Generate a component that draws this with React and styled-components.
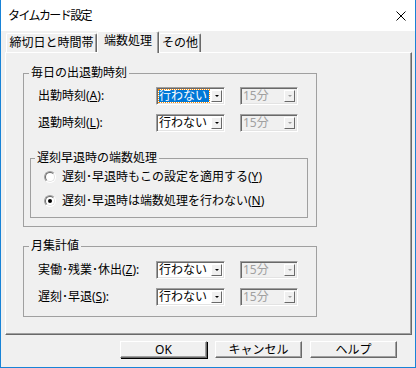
import React from "react";
import styled, { createGlobalStyle } from "styled-components";

const GlobalStyle = createGlobalStyle`
  html, body { margin: 0; padding: 0; background: #f0f0f0; }
  body {
    font-family: "Noto Sans", "Noto Sans CJK JP", sans-serif;
    font-size: 12px;
    color: #000;
  }
`;

const Window = styled.div`
  width: 416px;
  height: 368px;
  box-sizing: border-box;
  border: 1px solid #1883d7;
  border-top: none;
  background: #f0f0f0;
  display: flex;
  flex-direction: column;
`;

const TitleBar = styled.div`
  height: 31px;
  flex: none;
  background: #fff;
  display: flex;
  align-items: center;
  justify-content: space-between;
  padding: 0 9px 0 7px;
`;

const Title = styled.div`
  font-size: 12px;
  letter-spacing: -1.6px;
  line-height: 14px;
  padding-top: 1px;
`;

const Body = styled.div`
  display: flex;
  flex-direction: column;
  padding: 0 3px 0 4px;
`;

const TabStrip = styled.div`
  height: 21px;
  display: flex;
  align-items: flex-end;
  padding-left: 1px;
`;

const Tab = styled.div`
  position: relative;
  box-sizing: border-box;
  width: ${(p) => p.w}px;
  height: ${(p) => (p.active ? 22 : 19)}px;
  margin-bottom: ${(p) => (p.active ? -1 : 0)}px;
  z-index: ${(p) => (p.active ? 1 : 0)};
  background: #f0f0f0;
  border-top: 1px solid #fff;
  border-left: 1px solid #fff;
  border-right: 1px solid #696969;
  box-shadow: inset -1px 0 #a0a0a0;
  border-radius: 2px 2px 0 0;
  display: flex;
  align-items: ${(p) => (p.active ? "flex-start" : "center")};
  padding-top: ${(p) => (p.active ? 2 : 0)}px;
  justify-content: center;
  line-height: 14px;
  white-space: nowrap;
`;

const Panel = styled.div`
  box-sizing: border-box;
  height: 283px;
  border-top: 1px solid #fff;
  border-left: 1px solid #fff;
  border-right: 1px solid #696969;
  border-bottom: 1px solid #696969;
  box-shadow: inset -1px -1px #a0a0a0;
  padding: 13px 0 0 17px;
  display: flex;
  flex-direction: column;
`;

const Group = styled.fieldset`
  box-sizing: border-box;
  width: ${(p) => p.w}px;
  margin: ${(p) => p.mt || 0}px 0 0 ${(p) => p.ml || 0}px;
  padding: 0;
  border: 1px solid #a0a0a0;
  min-width: 0;
`;

const Legend = styled.legend`
  margin-left: ${(p) => p.ml || 5}px;
  padding: 0 2px;
  line-height: 14px;
  font-size: 12px;
`;

const GroupBody = styled.div`
  display: flex;
  flex-direction: column;
  gap: ${(p) => p.gap}px;
  padding: ${(p) => p.pad};
`;

const Row = styled.div`
  display: flex;
  align-items: center;
  height: 18px;
`;

const Label = styled.div`
  width: 118px;
  line-height: 14px;
  white-space: nowrap;
`;

const Combo = styled.div`
  box-sizing: border-box;
  width: ${(p) => p.w}px;
  height: 18px;
  margin-left: ${(p) => p.ml || 0}px;
  display: flex;
  border-top: 1px solid #a0a0a0;
  border-left: 1px solid #a0a0a0;
  border-right: 1px solid #fff;
  border-bottom: 1px solid #fff;
  box-shadow: inset 1px 1px #696969, inset -1px -1px #e3e3e3;
  padding: 1px 2px 1px 1px;
  background: ${(p) => (p.disabled ? "#f0f0f0" : "#fff")};
`;

const Field = styled.div`
  flex: 1;
  display: flex;
  align-items: center;
  margin: 1px 2px 1px 1px;
  line-height: 14px;
  color: ${(p) => (p.disabled ? "#a0a0a0" : p.focus ? "#fff" : "#000")};
  background: ${(p) => (p.focus ? "#0078d7" : "transparent")};
  outline: ${(p) => (p.focus ? "1px dotted #ff8c00" : "none")};
  outline-offset: 0;
  white-space: nowrap;
`;

const ArrowBtn = styled.div`
  box-sizing: border-box;
  width: 11px;
  margin: 1px 0;
  background: #f0f0f0;
  border-top: 1px solid #fff;
  border-left: 1px solid #fff;
  border-right: 1px solid #696969;
  border-bottom: 1px solid #696969;
  display: flex;
  align-items: center;
  justify-content: center;
  &::after {
    content: "";
    border-left: 2px solid transparent;
    border-right: 2px solid transparent;
    border-top: 2px solid ${(p) => (p.disabled ? "#a0a0a0" : "#000")};
  }
`;

const RadioRow = styled.div`
  display: flex;
  align-items: center;
  gap: 6px;
  height: 16px;
  line-height: 14px;
  white-space: nowrap;
`;

const RadioDot = styled.span`
  position: relative;
  box-sizing: border-box;
  width: 12px;
  height: 12px;
  border-radius: 50%;
  border: 1px solid;
  border-color: #a0a0a0 #fff #fff #a0a0a0;
  background: #fff;
  &::before {
    content: "";
    position: absolute;
    inset: 0;
    border-radius: 50%;
    border: 1px solid;
    border-color: #696969 #e3e3e3 #e3e3e3 #696969;
  }
  &::after {
    content: "";
    position: absolute;
    left: 3px;
    top: 3px;
    width: 4px;
    height: 4px;
    border-radius: 50%;
    background: ${(p) => (p.checked ? "#000" : "transparent")};
  }
`;

const ButtonRow = styled.div`
  display: flex;
  justify-content: flex-end;
  gap: 8px;
  margin-top: 6px;
  padding-right: 15px;
`;

const Button = styled.div`
  box-sizing: border-box;
  width: 87px;
  height: 17px;
  display: flex;
  align-items: center;
  justify-content: center;
  border-top: 1px solid #fff;
  border-left: 1px solid #fff;
  border-right: 1px solid #696969;
  border-bottom: 1px solid #696969;
  box-shadow: inset -1px -1px #a0a0a0
    ${(p) => (p.primary ? ", 1px 1px #000" : "")};
  line-height: 12px;
  font-size: 12px;
`;

function CloseIcon() {
  return (
    <svg width="10" height="10" viewBox="0 0 10 10">
      <path d="M0.5 0.5 L9.5 9.5 M9.5 0.5 L0.5 9.5" stroke="#000" strokeWidth="1" />
    </svg>
  );
}

function ComboBox({ w, ml, value, disabled, focus }) {
  return (
    <Combo w={w} ml={ml} disabled={disabled}>
      <Field disabled={disabled} focus={focus}>{value}</Field>
      <ArrowBtn disabled={disabled} />
    </Combo>
  );
}

function SettingRow({ label, focus }) {
  return (
    <Row>
      <Label>{label}</Label>
      <ComboBox w={69} value="行わない" focus={focus} />
      <ComboBox w={58} ml={15} value="15分" disabled />
    </Row>
  );
}

export default function App() {
  return (
    <>
      <GlobalStyle />
      <Window>
        <TitleBar>
          <Title>タイムカード設定</Title>
          <CloseIcon />
        </TitleBar>
        <Body>
          <TabStrip>
            <Tab w={91}>締切日と時間帯</Tab>
            <Tab w={62} active>端数処理</Tab>
            <Tab w={42}>その他</Tab>
          </TabStrip>
          <Panel>
            <Group w={294}>
              <Legend>毎日の出退勤時刻</Legend>
              <GroupBody gap={9} pad="7px 0 8px 14px">
                <SettingRow label={<>出勤時刻(<u>A</u>):</>} focus />
                <SettingRow label={<>退勤時刻(<u>L</u>):</>} />
              </GroupBody>
              <GroupBody gap={0} pad="11px 0 8px 6px">
                <Group w={278}>
                  <Legend ml={4}>遅刻早退時の端数処理</Legend>
                  <GroupBody gap={8} pad="4px 0 8px 13px">
                    <RadioRow>
                      <RadioDot />
                      <span>遅刻･早退時もこの設定を適用する(<u>Y</u>)</span>
                    </RadioRow>
                    <RadioRow>
                      <RadioDot checked />
                      <span>遅刻･早退時は端数処理を行わない(<u>N</u>)</span>
                    </RadioRow>
                  </GroupBody>
                </Group>
              </GroupBody>
            </Group>
            <Group w={294} mt={12}>
              <Legend>月集計値</Legend>
              <GroupBody gap={9} pad="8px 0 10px 14px">
                <SettingRow label={<>実働･残業･休出(<u>Z</u>):</>} />
                <SettingRow label={<>遅刻･早退(<u>S</u>):</>} />
              </GroupBody>
            </Group>
          </Panel>
          <ButtonRow>
            <Button primary>OK</Button>
            <Button>キャンセル</Button>
            <Button>ヘルプ</Button>
          </ButtonRow>
        </Body>
      </Window>
    </>
  );
}
